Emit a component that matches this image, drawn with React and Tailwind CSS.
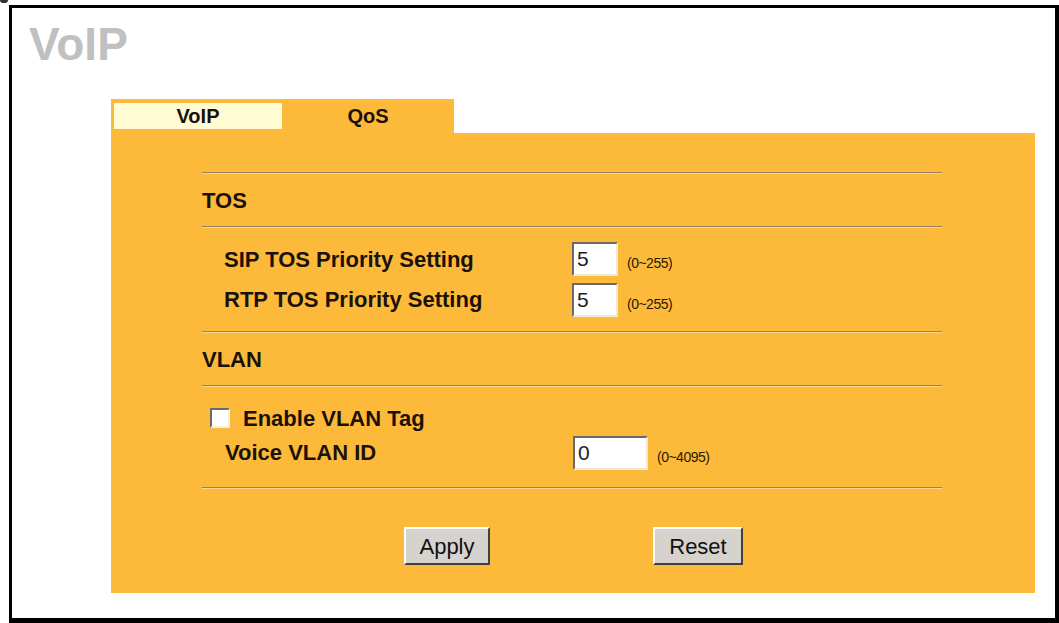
const font = { fontFamily: '"Liberation Sans", Arial, sans-serif' };

const Line = () => (
  <div className="w-[740px] h-[2px] border-t border-t-[#948264] border-b border-b-[#f7d894]" />
);

const TextBox = ({ value, width }) => (
  <div
    className={`${width} h-[34px] bg-white border-2 border-t-[#6a6a6a] border-l-[#6a6a6a] border-r-[#ece9d8] border-b-[#ece9d8] flex items-center pl-[3px] text-[21px] font-normal text-[#222]`}
  >
    {value}
  </div>
);

const Range = ({ children }) => (
  <span className="ml-[9px] mb-[2px] text-[14px] font-normal text-[#2a1a00] tracking-[-0.5px]">{children}</span>
);

const Button = ({ label, width }) => (
  <button
    className={`${width} h-[38px] bg-[#d6d3ce] border-2 border-t-white border-l-white border-r-[#404040] border-b-[#404040] text-[22px] text-[#111] flex items-center justify-center`}
  >
    {label}
  </button>
);

export default function App() {
  return (
    <div className="w-[1059px] h-[623px] bg-white overflow-hidden" style={font}>
      <div className="h-[5px] relative">
        <div className="w-[8px] h-[3px] bg-[#333] rounded-b-sm" />
      </div>
      <div className="ml-[9px] w-[1050px] h-[618px] border-[3px] border-r-[4px] border-b-[5px] border-black bg-white">
        <div className="pt-[13px] pl-[17px] h-[58px] text-[46px] leading-none font-bold text-[#c0c0c0]">VoIP</div>
        <div className="ml-[99px] mt-[33px] w-[924px]">
          <div className="w-[343px] h-[34px] bg-[#fdb93a] flex pt-[4px] pl-[3px]">
            <div className="w-[168px] h-[26px] bg-[#fffbd2] flex items-center justify-center text-[20px] font-bold text-[#1a1208]">
              VoIP
            </div>
            <div className="flex-1 h-[26px] flex items-center justify-center text-[20px] font-bold text-[#1a1208]">
              QoS
            </div>
          </div>
          <div className="h-[460px] bg-[#fdb93a] pl-[91px] pt-[39px] font-bold text-[22px] text-[#1a1208]">
            <Line />
            <div className="h-[52px] flex items-center">TOS</div>
            <Line />
            <div className="pt-[14px] pb-[14px] flex flex-col gap-[6px]">
              <div className="flex items-end h-[34px]">
                <div className="w-[370px] pl-[22px] self-center">SIP TOS Priority Setting</div>
                <TextBox value="5" width="w-[46px]" />
                <Range>(0~255)</Range>
              </div>
              <div className="flex items-end h-[35px]">
                <div className="w-[370px] pl-[22px] self-center">RTP TOS Priority Setting</div>
                <TextBox value="5" width="w-[46px]" />
                <Range>(0~255)</Range>
              </div>
            </div>
            <Line />
            <div className="h-[52px] flex items-center">VLAN</div>
            <Line />
            <div className="pt-[21px] pb-[17px] flex flex-col gap-[7px]">
              <div className="flex items-center h-[20px] pl-[8px]">
                <div className="w-[20px] h-[20px] bg-white border-2 border-t-[#6a6a6a] border-l-[#6a6a6a] border-r-[#f4f0e0] border-b-[#f4f0e0]" />
                <span className="ml-[13px]">Enable VLAN Tag</span>
              </div>
              <div className="flex items-end h-[35px]">
                <div className="w-[371px] pl-[23px] self-center">Voice VLAN ID</div>
                <TextBox value="0" width="w-[75px]" />
                <Range>(0~4095)</Range>
              </div>
            </div>
            <Line />
            <div className="flex mt-[38px] pl-[202px] gap-[163px] font-normal">
              <Button label="Apply" width="w-[86px]" />
              <Button label="Reset" width="w-[90px]" />
            </div>
          </div>
        </div>
      </div>
    </div>
  );
}
